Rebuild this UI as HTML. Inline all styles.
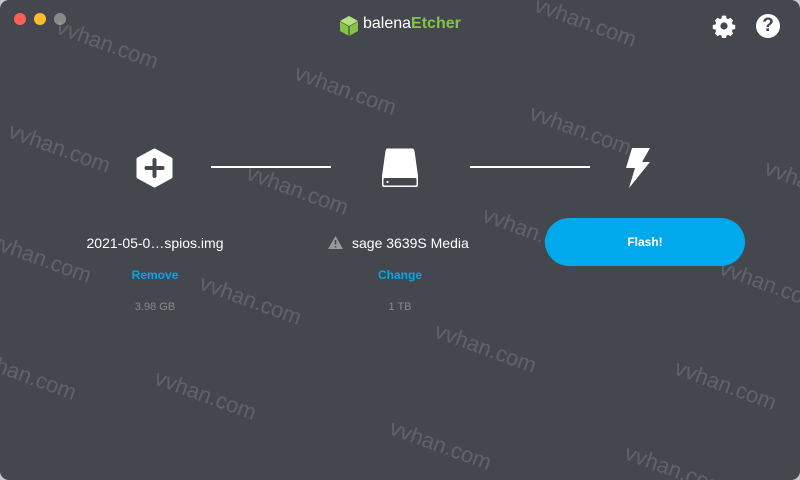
<!DOCTYPE html>
<html><head><style>
html,body{margin:0;width:800px;height:480px;overflow:hidden}
body{background:#c8c8c8;font-family:"Liberation Sans",sans-serif}
.win{position:absolute;left:0;top:0;width:800px;height:480px;background:#45474f;border-radius:9px;overflow:hidden}
.dot{position:absolute;top:13px;width:12px;height:12px;border-radius:50%}
.wm{position:absolute;color:rgba(255,255,255,0.15);font-size:22px;transform:rotate(20deg);transform-origin:left top;white-space:nowrap}
.t{position:absolute;color:#fff;font-size:14px;text-align:center}
.l{position:absolute;color:#00a9eb;font-size:12px;font-weight:bold;text-align:center}
.s{position:absolute;color:#888;font-size:11px;text-align:center}
.line{position:absolute;top:166px;height:2px;background:#fff}
</style></head><body><div class="win">
<div class="dot" style="left:14px;background:#fe5f57"></div>
<div class="dot" style="left:34px;background:#febc2e"></div>
<div class="dot" style="left:54px;background:#8a8a8a"></div>
<div class="wm" style="left:62px;top:14px">vvhan.com</div>
<div class="wm" style="left:300px;top:60px">vvhan.com</div>
<div class="wm" style="left:535px;top:100px">vvhan.com</div>
<div class="wm" style="left:540px;top:-8px">vvhan.com</div>
<div class="wm" style="left:14px;top:118px">vvhan.com</div>
<div class="wm" style="left:252px;top:160px">vvhan.com</div>
<div class="wm" style="left:488px;top:202px">vvhan.com</div>
<div class="wm" style="left:770px;top:155px">vvhan.com</div>
<div class="wm" style="left:-5px;top:228px">vvhan.com</div>
<div class="wm" style="left:205px;top:270px">vvhan.com</div>
<div class="wm" style="left:440px;top:318px">vvhan.com</div>
<div class="wm" style="left:725px;top:255px">vvhan.com</div>
<div class="wm" style="left:160px;top:365px">vvhan.com</div>
<div class="wm" style="left:680px;top:355px">vvhan.com</div>
<div class="wm" style="left:395px;top:415px">vvhan.com</div>
<div class="wm" style="left:630px;top:440px">vvhan.com</div>
<div class="wm" style="left:-20px;top:345px">vvhan.com</div>
<svg style="position:absolute;left:339px;top:15px" width="20" height="22" viewBox="0 0 20 22"><path d="M10 1L19 6V16L10 21L1 16V6Z" fill="#85c446"/><path d="M10 11L1 6M10 11L19 6M10 11V21" stroke="#45474f" stroke-width="1.2" fill="none"/><path d="M10 1L19 6L10 11L1 6Z" fill="#b5e07e"/></svg>
<div style="position:absolute;left:363px;top:15px;font-size:16px;color:#fff">balena<b style="color:#85c446">Etcher</b></div>
<svg style="position:absolute;left:712px;top:14px" width="24" height="24" viewBox="0 0 24 24"><path fill="#fff" d="M12 1.5l2 .3.5 2.6 1.6.8 2.3-1.4 2.8 2.8-1.4 2.3.8 1.6 2.6.5v4l-2.6.5-.8 1.6 1.4 2.3-2.8 2.8-2.3-1.4-1.6.8-.5 2.6h-4l-.5-2.6-1.6-.8-2.3 1.4-2.8-2.8 1.4-2.3-.8-1.6-2.6-.5v-4l2.6-.5.8-1.6-1.4-2.3 2.8-2.8 2.3 1.4 1.6-.8.5-2.6z"/><circle cx="12" cy="12" r="3.6" fill="#45474f"/></svg>
<div style="position:absolute;left:756px;top:14px;width:24px;height:24px;border-radius:50%;background:#fff;color:#45474f;font-weight:bold;font-size:19px;text-align:center;line-height:24px">?</div>
<svg style="position:absolute;left:135px;top:148px" width="40" height="40" viewBox="0 0 40 40"><path d="M19.5 2L36 11V29L19.5 38L3 29V11Z" fill="#fff" stroke="#fff" stroke-linejoin="round" stroke-width="3"/><path d="M19.5 12V28M11.5 20H27.5" stroke="#45474f" stroke-width="4" stroke-linecap="round"/></svg>
<div class="line" style="left:211px;width:120px"></div>
<div class="line" style="left:470px;width:120px"></div>
<svg style="position:absolute;left:380px;top:147px" width="40" height="42" viewBox="0 0 40 42"><path d="M7 1.5H32Q34 1.5 34.5 4L38 29V38Q38 40 36 40H4Q2 40 2 38V29L5.5 4Q6 1.5 7 1.5Z" fill="#fff"/><rect x="3.5" y="31" width="33" height="7.5" rx="1.5" fill="#45474f"/><circle cx="7.5" cy="35" r="1.1" fill="#fff"/></svg>
<svg style="position:absolute;left:624px;top:148px" width="28" height="40" viewBox="0 0 28 40"><path d="M8 0H26L18 14H26L5 40L11 20H2Z" fill="#fff"/></svg>
<div class="t" style="left:55px;width:200px;top:235px">2021-05-0…spios.img</div>
<div class="l" style="left:55px;width:200px;top:268px">Remove</div>
<div class="s" style="left:55px;width:200px;top:301px">3.98 GB</div>
<svg style="position:absolute;left:328px;top:236px" width="15" height="13" viewBox="0 0 15 13"><path d="M7.5 0L15 13H0Z" fill="#999"/><path d="M7.5 4V8.5M7.5 10v1.5" stroke="#45474f" stroke-width="1.6"/></svg>
<div class="t" style="left:352px;top:235px">sage 3639S Media</div>
<div class="l" style="left:300px;width:200px;top:268px">Change</div>
<div class="s" style="left:300px;width:200px;top:301px">1 TB</div>
<div style="position:absolute;left:545px;top:218px;width:200px;height:48px;border-radius:24px;background:#00a9eb;color:#fff;font-size:12px;font-weight:bold;text-align:center;line-height:48px">Flash!</div>
</div></body></html>
